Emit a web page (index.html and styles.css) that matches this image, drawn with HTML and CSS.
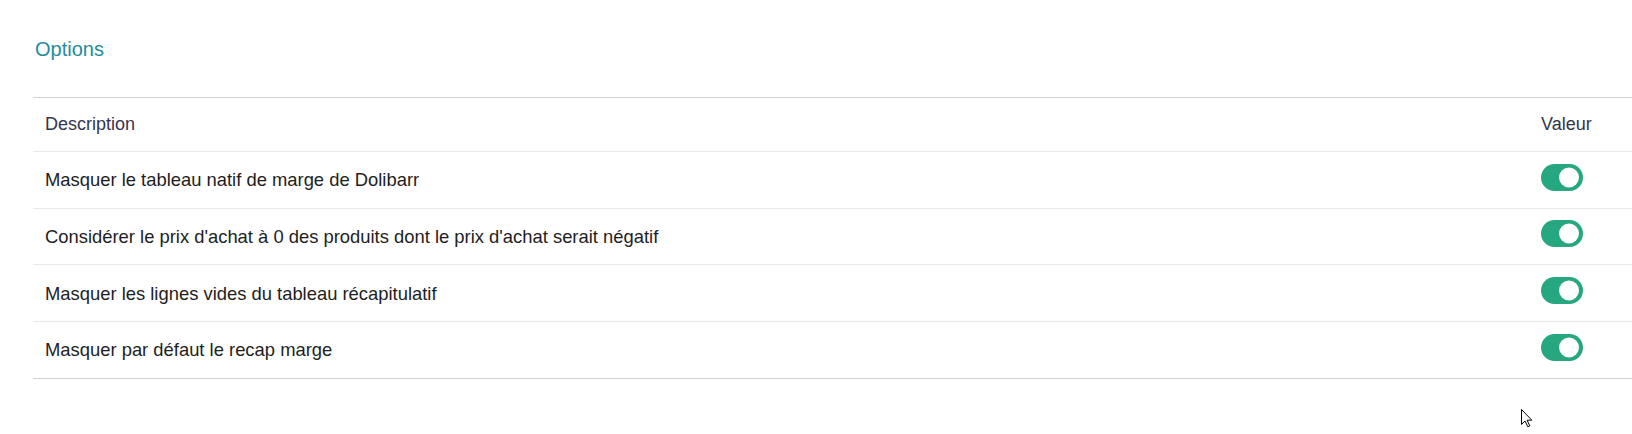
FILE: index.html
```html
<!DOCTYPE html>
<html lang="fr">
<head>
<meta charset="utf-8">
<title>Options</title>
<link rel="stylesheet" href="styles.css">
</head>
<body>
<div class="page">
  <h2 class="section-title">Options</h2>

  <div class="setup-table">
    <div class="row row-head">
      <div class="cell">Description</div>
      <div class="cell cell-value">Valeur</div>
    </div>

    <div class="row">
      <div class="cell">Masquer le tableau natif de marge de Dolibarr</div>
      <div class="cell cell-value">
        <svg class="toggle" viewBox="0 0 42 27" width="42" height="27" aria-label="Activé">
          <rect x="0" y="0" width="42" height="27" rx="13.5" ry="13.5"/>
          <circle cx="28" cy="13.5" r="10"/>
        </svg>
      </div>
    </div>

    <div class="row">
      <div class="cell">Considérer le prix d'achat à 0 des produits dont le prix d'achat serait négatif</div>
      <div class="cell cell-value">
        <svg class="toggle" viewBox="0 0 42 27" width="42" height="27" aria-label="Activé">
          <rect x="0" y="0" width="42" height="27" rx="13.5" ry="13.5"/>
          <circle cx="28" cy="13.5" r="10"/>
        </svg>
      </div>
    </div>

    <div class="row">
      <div class="cell">Masquer les lignes vides du tableau récapitulatif</div>
      <div class="cell cell-value">
        <svg class="toggle" viewBox="0 0 42 27" width="42" height="27" aria-label="Activé">
          <rect x="0" y="0" width="42" height="27" rx="13.5" ry="13.5"/>
          <circle cx="28" cy="13.5" r="10"/>
        </svg>
      </div>
    </div>

    <div class="row row-last">
      <div class="cell">Masquer par défaut le recap marge</div>
      <div class="cell cell-value">
        <svg class="toggle" viewBox="0 0 42 27" width="42" height="27" aria-label="Activé">
          <rect x="0" y="0" width="42" height="27" rx="13.5" ry="13.5"/>
          <circle cx="28" cy="13.5" r="10"/>
        </svg>
      </div>
    </div>
  </div>
</div>

<!-- mouse pointer resting over the page -->
<svg class="pointer" viewBox="0 0 12 19" width="12" height="19">
  <path d="M0.5 0.5 L0.5 15.5 L4 12 L6.8 17.8 L8.8 16.9 L6.1 11.2 L10.8 11.2 Z"/>
</svg>
</body>
</html>
```

FILE: styles.css
```css
html, body {
  margin: 0;
  padding: 0;
  background: #ffffff;
  overflow: hidden;
}

body {
  font-family: "Liberation Sans", Arial, sans-serif;
  color: #1e1e1e;
}

.page {
  padding: 38px 0 0 33px;
}

.section-title {
  margin: 0 0 0 2px;
  font-size: 20px;
  line-height: 23px;
  font-weight: normal;
  color: #268c9c;
}

.setup-table {
  margin-top: 36px;
  border-top: 1px solid #d2d2d2;
}

.row {
  display: grid;
  grid-template-columns: 1fr 103px;
  align-items: center;
  box-sizing: border-box;
  height: 56.67px;
  border-bottom: 1px solid #e8e8e8;
  font-size: 18.4px;
  line-height: 21px;
}

.row-head {
  height: 54px;
  font-size: 18px;
  color: #34354c;
}

.row-last {
  border-bottom-color: #d2d2d2;
}

.cell {
  padding-left: 12px;
  white-space: nowrap;
}

.cell-value {
  display: flex;
  align-items: center;
}

.toggle {
  display: block;
  margin-bottom: 5px;
}

.toggle rect {
  fill: #27a77f;
}

.toggle circle {
  fill: #ffffff;
}

.pointer {
  position: absolute;
  left: 1521px;
  top: 409px;
}

.pointer path {
  fill: #ffffff;
  stroke: #000000;
  stroke-width: 1;
  stroke-linejoin: miter;
}
```
